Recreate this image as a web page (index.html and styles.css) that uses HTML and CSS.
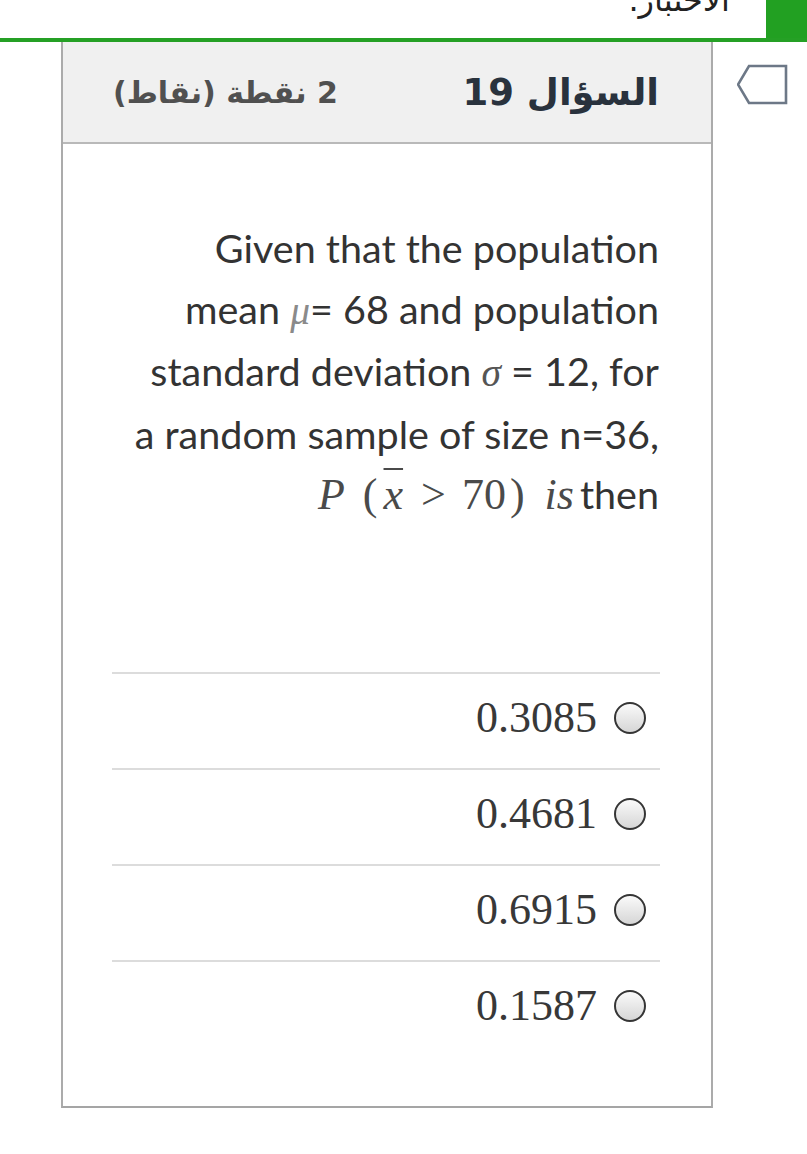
FILE: index.html
```html
<!DOCTYPE html>
<html lang="ar">
<head>
<meta charset="utf-8">
<title>السؤال 19</title>
<link rel="stylesheet" href="styles.css">
</head>
<body>
<div class="topbar">
  <div class="topbar-text" dir="rtl">الاختبار.</div>
  <div class="topbar-green"></div>
</div>
<div class="main">
  <div class="card">
    <div class="card-header" dir="rtl">
      <div class="q-title">السؤال 19</div>
      <div class="q-points">2 نقطة (نقاط)</div>
    </div>
    <div class="q-text">
      Given that the population<br>
      mean <span class="m-mu">μ</span>= 68 and population<br>
      standard deviation <span class="m-sigma">σ</span> = 12, for<br>
      a random sample of size n=36,<br>
      <span class="math"><span class="mi m-p">P</span><span class="mp">(</span><span class="mi xbar">x</span><span class="m-gt">&gt;</span>70<span class="mp m-close">)</span></span><span class="math mi is">is</span>then
    </div>
    <div class="options">
      <div class="option"><span class="opt-val">0.3085</span><span class="radio"></span></div>
      <div class="option"><span class="opt-val">0.4681</span><span class="radio"></span></div>
      <div class="option"><span class="opt-val">0.6915</span><span class="radio"></span></div>
      <div class="option"><span class="opt-val">0.1587</span><span class="radio"></span></div>
    </div>
  </div>
  <div class="flag-col">
    <svg class="flag" width="52" height="42" viewBox="0 0 52 42">
      <path d="M12 2 H49 V39 H12 L1 20.5 Z" fill="none" stroke="#6d7887" stroke-width="2.6" stroke-linejoin="miter"/>
    </svg>
  </div>
</div>
</body>
</html>
```

FILE: styles.css
```css
html, body {
  margin: 0;
  padding: 0;
  background: #ffffff;
}

body {
  font-family: "DejaVu Sans", "Noto Sans", sans-serif;
  color: #333;
}

.topbar {
  display: flex;
  height: 38px;
  border-bottom: 4px solid #25a025;
  overflow: hidden;
}

.topbar-text {
  flex: 1;
  text-align: right;
  padding-right: 36px;
  font-family: "DejaVu Sans", sans-serif;
  font-size: 32px;
  line-height: 34px;
  margin-top: -17px;
  color: #222;
}

.topbar-green {
  width: 41px;
  background: #22a022;
}

.main {
  display: flex;
  padding-left: 61px;
}

.card {
  width: 652px;
  box-sizing: border-box;
  border-left: 2px solid #ababab;
  border-right: 2px solid #ababab;
  border-bottom: 2px solid #a5a5a5;
  padding-bottom: 50px;
}

.card-header {
  height: 102px;
  box-sizing: border-box;
  background: #f0f0f0;
  border-bottom: 2px solid #b9b9b9;
  display: flex;
  justify-content: space-between;
  align-items: center;
  padding: 0 52px 0 50px;
}

.q-title {
  font-family: "DejaVu Sans", sans-serif;
  font-weight: bold;
  font-size: 37px;
  color: #29323d;
}

.q-points {
  font-family: "DejaVu Sans", sans-serif;
  font-weight: bold;
  font-size: 30px;
  color: #505050;
}

.q-text {
  padding: 74px 52px 0 0;
  text-align: right;
  font-family: Lato, "Open Sans", sans-serif;
  font-size: 39.5px;
  line-height: 60.5px;
  color: #333;
}

.m-mu, .m-sigma {
  font-family: "Liberation Serif", serif;
  font-style: italic;
  color: #555;
}

.m-mu {
  color: #8a8a8a;
}

.math {
  font-family: "Liberation Serif", serif;
  font-size: 44px;
  line-height: 40px;
  color: #4a4a4a;
}

.mi {
  font-style: italic;
}

.mp {
  font-style: normal;
}

.m-p {
  margin-right: 18px;
}

.xbar {
  margin-left: 6px;
  text-decoration: overline;
  text-decoration-thickness: 1.5px;
}

.m-gt {
  margin: 0 16px 0 18px;
}

.m-close {
  margin-left: 4px;
}

.is {
  margin: 0 6px 0 20px;
}

.options {
  margin: 147px 51px 0 49px;
}

.option {
  height: 96px;
  box-sizing: border-box;
  border-top: 2px solid #dcdcdc;
  display: flex;
  justify-content: flex-end;
  align-items: center;
  gap: 17px;
  padding: 0 14px 6px 0;
}

.opt-val {
  font-family: "Liberation Serif", serif;
  font-size: 44px;
  color: #383838;
}

.radio {
  width: 32px;
  height: 32px;
  box-sizing: border-box;
  border-radius: 50%;
  border: 2.5px solid #353535;
  background: linear-gradient(#fafafa, #d6d6d6);
}

.flag-col {
  flex: 1;
  padding: 22px 0 0 24px;
}

.flag {
  display: block;
}
```
